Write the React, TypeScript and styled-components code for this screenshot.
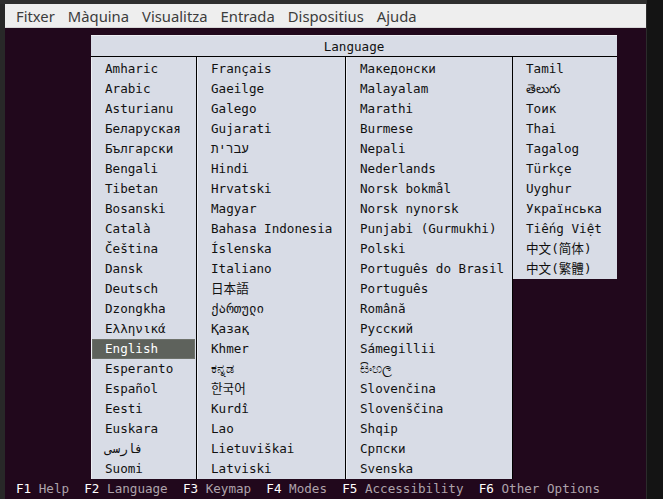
import styled, { createGlobalStyle } from 'styled-components';

const mono = `'DejaVu Sans Mono', 'Liberation Mono', 'Noto Sans CJK SC', monospace`;

const GlobalStyle = createGlobalStyle`
  html, body {
    margin: 0;
    padding: 0;
    background: #141414;
    overflow: hidden;
  }
  #root {
    width: 663px;
    height: 499px;
  }
`;

/* ---- host window ---- */

const Page = styled.div`
  display: flex;
  width: 663px;
  height: 499px;
`;

const Host = styled.div`
  display: flex;
  flex-direction: column;
  width: 646px;
  background: #2a2a2a;
`;

const TopStrip = styled.div`
  height: 5px;
  background: #2e2e2e;
`;

const Body = styled.div`
  flex: 1;
  display: flex;
  padding-left: 5px;
  background: #282828;
`;

const Side = styled.div`
  flex: 1;
  background: #141414;
  border-left: 1px solid #2b2b2b;
`;

const Window = styled.div`
  flex: 1;
  display: flex;
  flex-direction: column;
`;

const MenuBar = styled.div`
  display: flex;
  align-items: center;
  gap: 13px;
  height: 23px;
  padding-left: 11px;
  background: #eeeeee;
  border-bottom: 1px solid #d6d6d6;
  font-family: 'Noto Sans', sans-serif;
  font-size: 14.8px;
  color: #3c3c3c;
`;

const MenuItem = styled.span`
  white-space: nowrap;
`;

/* ---- VM screen ---- */

const Screen = styled.div`
  flex: 1;
  display: flex;
  flex-direction: column;
  padding: 7px 0 0 86px;
  background: #21081c;
  font-family: ${mono};
  font-size: 12.6px;
  overflow: hidden;
`;

const Dialog = styled.div`
  flex: 1;
  display: flex;
  flex-direction: column;
  width: 526px;
  min-height: 0;
`;

const TitleBar = styled.div`
  display: flex;
  align-items: center;
  justify-content: center;
  height: 20px;
  background: #d8dce6;
  border-top: 1px solid #eceef3;
  border-bottom: 1px solid #000;
  color: #111;
`;

const Columns = styled.div`
  flex: 1;
  display: grid;
  grid-template-columns: 106px 149px 167px 104px;
  min-height: 0;
  overflow: hidden;
`;

const Column = styled.div<{ $last?: boolean }>`
  align-self: ${({ $last }) => ($last ? 'start' : 'stretch')};
  padding-top: 2px;
  background: #d8dce6;
  border-left: ${({ $last }) => ($last ? '0' : '1px solid #eceef3')};
  border-right: ${({ $last }) => ($last ? '0' : '1px solid #000')};
`;

const Row = styled.div<{ $selected?: boolean }>`
  height: 20px;
  line-height: 20px;
  padding-left: 13px;
  margin-right: 1px;
  white-space: nowrap;
  color: ${({ $selected }) => ($selected ? '#ffffff' : '#111111')};
  background: ${({ $selected }) => ($selected ? '#5e625c' : 'transparent')};
  box-shadow: ${({ $selected }) => ($selected ? 'inset 0 0 0 1px #6e726b' : 'none')};
`;

const Footer = styled.div`
  height: 20px;
  line-height: 20px;
  margin-left: -75px;
  white-space: pre;
  color: #aea3ab;
`;

const Key = styled.span`
  color: #ffffff;
`;

const columns: string[][] = [
  [
    'Amharic', 'Arabic', 'Asturianu', 'Беларуская', 'Български', 'Bengali', 'Tibetan',
    'Bosanski', 'Català', 'Čeština', 'Dansk', 'Deutsch', 'Dzongkha', 'Ελληνικά',
    'English', 'Esperanto', 'Español', 'Eesti', 'Euskara', 'فارسی', 'Suomi',
  ],
  [
    'Français', 'Gaeilge', 'Galego', 'Gujarati', 'עברית', 'Hindi', 'Hrvatski', 'Magyar',
    'Bahasa Indonesia', 'Íslenska', 'Italiano', '日本語', 'ქართული', 'Қазақ', 'Khmer',
    'ಕನ್ನಡ', '한국어', 'Kurdî', 'Lao', 'Lietuviškai', 'Latviski',
  ],
  [
    'Македонски', 'Malayalam', 'Marathi', 'Burmese', 'Nepali', 'Nederlands', 'Norsk bokmål',
    'Norsk nynorsk', 'Punjabi (Gurmukhi)', 'Polski', 'Português do Brasil', 'Português',
    'Română', 'Русский', 'Sámegillii', 'සිංහල', 'Slovenčina', 'Slovenščina', 'Shqip',
    'Српски', 'Svenska',
  ],
  [
    'Tamil', 'తెలుగు', 'Тоик', 'Thai', 'Tagalog', 'Türkçe', 'Uyghur', 'Українська',
    'Tiếng Việt', '中文(简体)', '中文(繁體)',
  ],
];

const menu = ['Fitxer', 'Màquina', 'Visualitza', 'Entrada', 'Dispositius', 'Ajuda'];

const keys: [string, string][] = [
  ['F1', 'Help'],
  ['F2', 'Language'],
  ['F3', 'Keymap'],
  ['F4', 'Modes'],
  ['F5', 'Accessibility'],
  ['F6', 'Other Options'],
];

const App = () => {
  const selected = 'English';

  return (
    <Page>
      <GlobalStyle />
      <Host>
        <TopStrip />
        <Body>
          <Window>
            <MenuBar>
              {menu.map((m) => (
                <MenuItem key={m}>{m}</MenuItem>
              ))}
            </MenuBar>
            <Screen>
              <Dialog>
                <TitleBar>Language</TitleBar>
                <Columns>
                  {columns.map((col, i) => (
                    <Column key={i} $last={i === columns.length - 1}>
                      {col.map((lang) => (
                        <Row key={lang} $selected={lang === selected}>
                          {lang}
                        </Row>
                      ))}
                    </Column>
                  ))}
                </Columns>
              </Dialog>
              <Footer>
                {keys.map(([k, label], i) => (
                  <span key={k}>
                    <Key>{k}</Key> {label}
                    {i < keys.length - 1 ? '  ' : ''}
                  </span>
                ))}
              </Footer>
            </Screen>
          </Window>
        </Body>
      </Host>
      <Side />
    </Page>
  );
};

export default App;
